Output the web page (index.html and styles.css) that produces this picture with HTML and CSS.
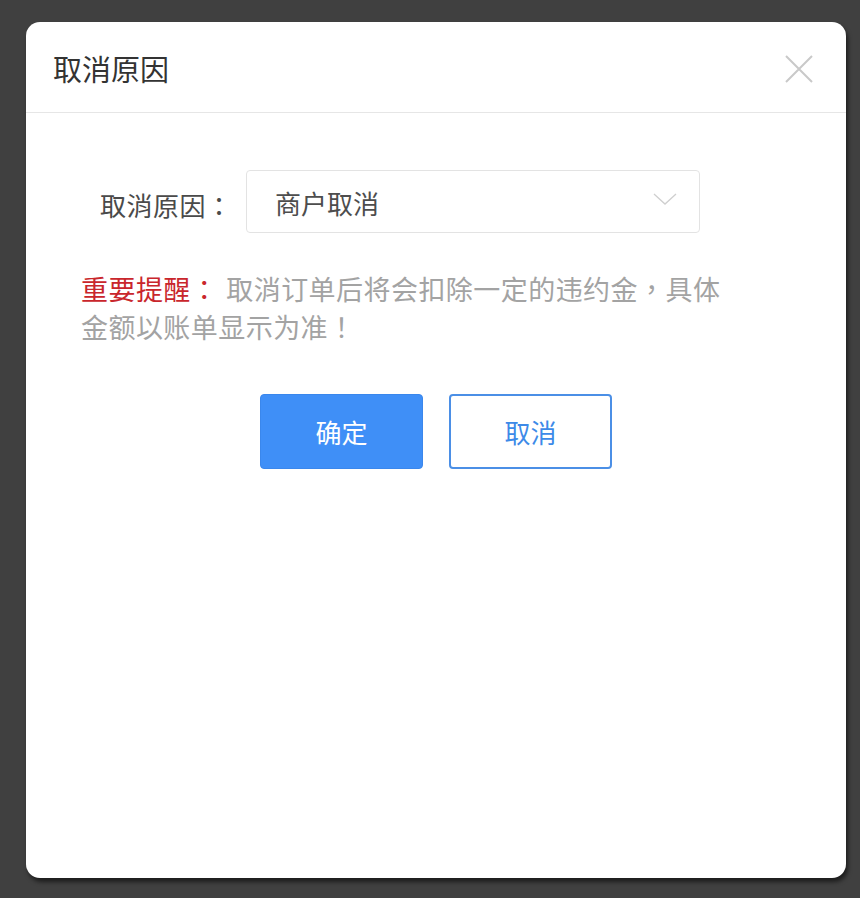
FILE: index.html
```html
<!DOCTYPE html>
<html lang="zh-CN">
<head>
<meta charset="utf-8">
<title>取消原因</title>
<link rel="stylesheet" href="styles.css">
</head>
<body>
<div class="backdrop">
  <div class="modal">
    <div class="modal-header">
      <h2 class="modal-title">取消原因</h2>
      <button class="close" aria-label="关闭">
        <svg width="28" height="28" viewBox="0 0 28 28"><path d="M1 1 L27 27 M27 1 L1 27" stroke="#c9c9c9" stroke-width="2" fill="none"/></svg>
      </button>
    </div>
    <div class="modal-body">
      <div class="form-row">
        <span class="label" lang="zh-TW">取消原因：</span>
        <div class="select">
          <span class="select-value">商户取消</span>
          <svg class="chevron" width="24" height="12" viewBox="0 0 24 12"><path d="M1 1 L12 11 L23 1" stroke="#cfcfcf" stroke-width="1.3" fill="none"/></svg>
        </div>
      </div>
      <p class="notice" lang="zh-TW"><span class="notice-key">重要提醒：</span>取消订单后将会扣除一定的违约金，具体金额以账单显示为准！</p>
      <div class="actions">
        <button class="btn btn-primary">确定</button>
        <button class="btn btn-outline">取消</button>
      </div>
    </div>
  </div>
</div>
</body>
</html>
```

FILE: styles.css
```css
html, body {
  margin: 0;
  padding: 0;
}
body {
  background: #404040;
  font-family: "Noto Sans CJK SC", "Noto Sans", sans-serif;
  width: 860px;
  height: 898px;
  overflow: hidden;
}
.backdrop {
  padding: 22px 0 0 26px;
}
.modal {
  width: 820px;
  height: 856px;
  background: #fff;
  border-radius: 14px;
  box-shadow: 2px 4px 4px rgba(0, 0, 0, 0.55);
  overflow: hidden;
}
.modal-header {
  height: 90px;
  border-bottom: 1px solid #e6e6e6;
  display: flex;
  align-items: center;
  justify-content: space-between;
  padding: 0 33px 0 27px;
}
.modal-title {
  margin: 0;
  font-size: 29px;
  font-weight: normal;
  color: #333;
  line-height: 1;
  padding-top: 2px;
}
.close {
  border: 0;
  background: none;
  padding: 0;
  width: 28px;
  height: 28px;
  display: block;
  margin-top: 4px;
}
.close svg { display: block; }
.modal-body {
  padding: 57px 0 0 55px;
}
.form-row {
  display: flex;
  align-items: center;
  padding-left: 19px;
}
.label {
  width: 146px;
  font-family: "Noto Sans CJK SC", "Noto Sans CJK TC", sans-serif;
  font-size: 26px;
  color: #4a4a4a;
  margin-top: 6px;
  letter-spacing: 0.5px;
}
.select {
  height: 61px;
  border: 1px solid #e3e3e3;
  border-radius: 4px;
  display: flex;
  align-items: center;
  justify-content: space-between;
  padding: 0 22px 0 28px;
  box-sizing: content-box;
  width: 402px;
}
.select-value {
  font-size: 26px;
  color: #4d4d4d;
  margin-top: 2px;
}
.chevron {
  display: block;
  margin-top: -6px;
}
.notice {
  margin: 37px 0 0;
  width: 660px;
  font-family: "Noto Sans CJK SC", "Noto Sans CJK TC", sans-serif;
  font-size: 27px;
  line-height: 38px;
  color: #a3a3a3;
  letter-spacing: 0.45px;
}
.notice-key {
  color: #c9262c;
  margin-right: 8px;
}
.actions {
  display: flex;
  justify-content: center;
  gap: 26px;
  margin: 48px 0 0 -55px;
}
.btn {
  width: 163px;
  height: 75px;
  border-radius: 4px;
  font-family: inherit;
  font-size: 26px;
  padding: 0;
  box-sizing: border-box;
}
.btn-primary {
  background: #3f8ff7;
  border: 1px solid #3a87ec;
  color: #fff;
}
.btn-outline {
  background: #fff;
  border: 2px solid #4b8fe6;
  color: #3d8ae8;
}
```
